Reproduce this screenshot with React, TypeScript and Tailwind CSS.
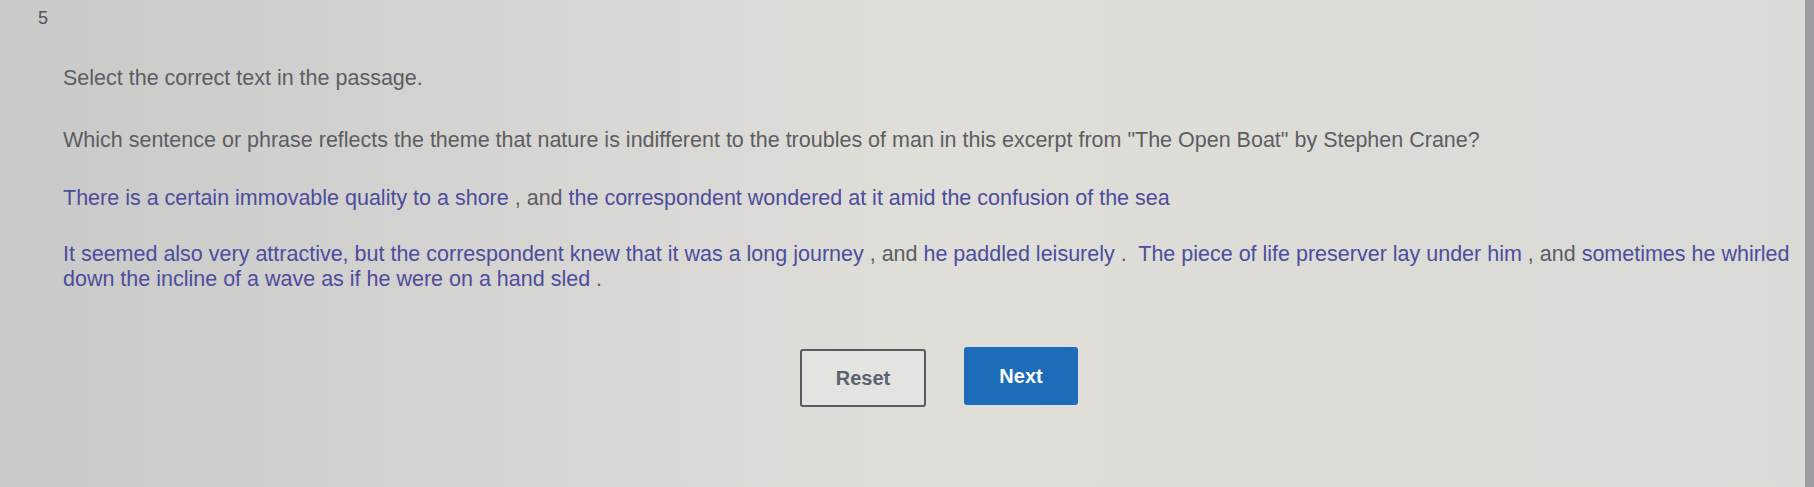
import React from "react";

type Piece = { text: string; pick?: boolean };

const firstPassage: Piece[] = [
  { text: "There is a certain immovable quality to a shore", pick: true },
  { text: " , and " },
  { text: "the correspondent wondered at it amid the confusion of the sea", pick: true },
];

const secondPassage: Piece[] = [
  { text: "It seemed also very attractive, but the correspondent knew that it was a long journey", pick: true },
  { text: " , and " },
  { text: "he paddled leisurely", pick: true },
  { text: " .  " },
  { text: "The piece of life preserver lay under him", pick: true },
  { text: " , and " },
  { text: "sometimes he whirled", pick: true },
];

function Phrase({ piece }: { piece: Piece }) {
  if (!piece.pick) {
    return <span className="whitespace-pre text-[#5d5d62]">{piece.text}</span>;
  }
  return (
    <span className="cursor-pointer text-[#4d4d9d] hover:underline">{piece.text}</span>
  );
}

export default function App() {
  return (
    <div
      className="flex h-[487px] w-full overflow-hidden bg-gradient-to-r from-[#c9c9c9] via-[#dfded9] to-[#dadad6] text-[#5d5d62]"
      style={{ fontFamily: '"Liberation Sans", Arial, sans-serif' }}
    >
      <main className="min-w-0 flex-1">
        <div className="pl-[38px] pt-[9px] text-[18px] leading-[18px] text-[#55555a]">5</div>

        <div className="pl-[63px] text-[21.5px] leading-[25px]">
          <p className="mt-[39px] whitespace-nowrap">Select the correct text in the passage.</p>

          <p className="mt-[37px] whitespace-nowrap">
            Which sentence or phrase reflects the theme that nature is indifferent to the troubles
            of man in this excerpt from "The Open Boat" by Stephen Crane?
          </p>

          <p className="mt-[33px] whitespace-nowrap">
            {firstPassage.map((piece, i) => (
              <Phrase key={i} piece={piece} />
            ))}
          </p>

          <p className="mt-[31px] whitespace-nowrap">
            {secondPassage.map((piece, i) => (
              <Phrase key={i} piece={piece} />
            ))}
            <br />
            <span className="text-[#4d4d9d]">down the incline of a wave as if he were on a hand sled</span>
            <span className="text-[#5d5d62]"> .</span>
          </p>

          <div className="mt-[55px] flex items-start gap-[38px] pl-[737px]">
            <button
              type="button"
              className="mt-[2px] h-[58px] w-[126px] rounded-[3px] border-2 border-[#5a5a62] bg-[#e3e3df] text-[20px] font-bold text-[#5b6272]"
            >
              Reset
            </button>
            <button
              type="button"
              className="h-[58px] w-[114px] rounded-[3px] bg-[#1d6cb9] text-[20px] font-bold text-white"
            >
              Next
            </button>
          </div>
        </div>
      </main>
      <div className="w-[9px] shrink-0 bg-[#9d9da3]" />
    </div>
  );
}
